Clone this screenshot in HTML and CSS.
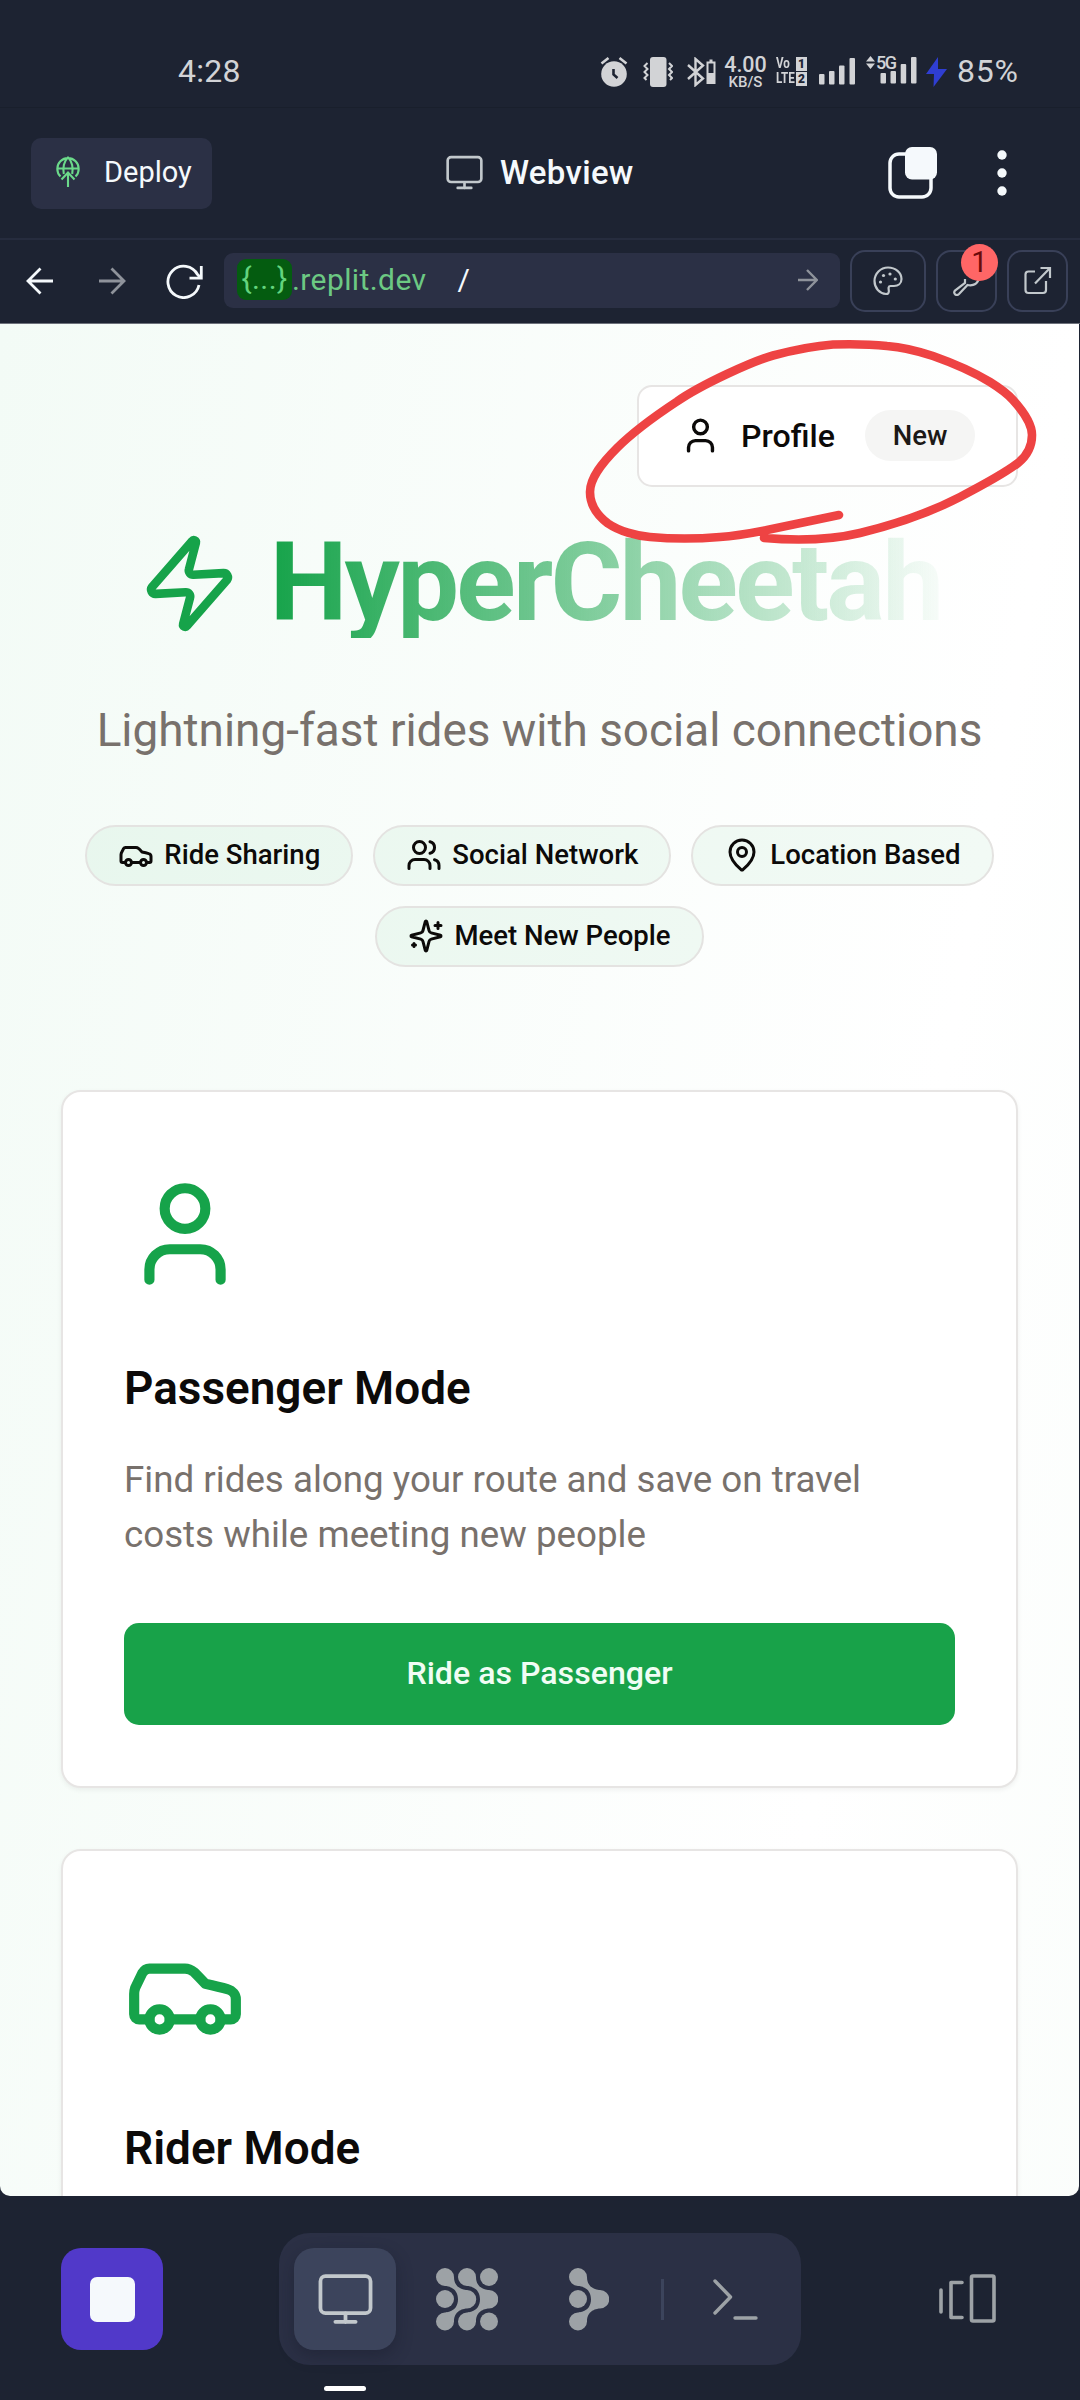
FILE: index.html
```html
<!DOCTYPE html>
<html lang="en">
<head>
<meta charset="utf-8">
<title>Webview</title>
<link rel="stylesheet" href="styles.css">
</head>
<body>
<svg class="defs" aria-hidden="true">
  <symbol id="user" viewBox="0 0 24 24"><path d="M19 21v-2a4 4 0 0 0-4-4H9a4 4 0 0 0-4 4v2"/><circle cx="12" cy="7" r="4"/></symbol>
  <symbol id="car" viewBox="0 0 24 24"><path d="M19 17h2c.6 0 1-.4 1-1v-3c0-.9-.7-1.7-1.5-1.9C18.700 10.600 16 10 16 10s-1.300-1.400-2.200-2.300c-.5-.4-1.100-.7-1.800-.7H5c-.6 0-1.100.4-1.400.9l-1.400 2.900A3.700 3.700 0 0 0 2 12v4c0 .6.4 1 1 1h2"/><circle cx="7" cy="17" r="2"/><path d="M9 17h6"/><circle cx="17" cy="17" r="2"/></symbol>
  <symbol id="monitor" viewBox="0 0 38 35"><rect x="1.700" y="1.700" width="34.600" height="25.600" rx="3.500"/><path d="M19 27.500v6M12 33.300h14"/></symbol>
</svg>
<div class="phone">
  <div class="status">
    <span class="clock">4:28</span>
    <div class="indicators">
      <svg class="alarm" width="28" height="32" viewBox="0 0 28 32"><circle cx="14" cy="18" r="12.800" fill="#d2d3d6"/><path d="M1.500 7.500 8.500 2M26.500 7.500 19.500 2" stroke="#d2d3d6" stroke-width="2.600"/><path d="M13.500 13v5.500l4 3.500" stroke="#1d2332" stroke-width="2.600" fill="none"/></svg>
      <svg class="vibrate" width="30" height="30" viewBox="0 0 30 30"><rect x="7" y="0" width="16.500" height="30" rx="3" fill="#d2d3d6"/><path d="M4.500 6 1.500 9l3 3-3 3 3 3-3 3 2 2M26 6l3 3-3 3 3 3-3 3 3 3-2 2" stroke="#d2d3d6" stroke-width="2" fill="none"/></svg>
      <svg class="bluetooth" width="30" height="30" viewBox="0 0 30 30"><path d="M1 8l15 13.500-7.500 6.500V2L16 8.500 1 22" fill="none" stroke="#d2d3d6" stroke-width="2.400"/><path d="M20.500 5.500h7v20.500h-7zM22.500 3.500h3" fill="none" stroke="#d2d3d6" stroke-width="2"/><path d="M20.500 16h7v10h-7z" fill="#d2d3d6"/></svg>
      <div class="speed"><span class="rate">4.00</span><span class="unit">KB/S</span></div>
      <div class="volte"><span>Vo</span><b>1</b><span class="lte">LTE</span><b>2</b></div>
      <svg class="bars" width="37" height="30" viewBox="0 0 37 30" fill="#d2d3d6"><rect y="16" width="5.500" height="10.500" rx="1"/><rect x="10" y="13" width="5.500" height="13.500" rx="1"/><rect x="20" y="7.500" width="5.500" height="19" rx="1"/><rect x="30.500" y="0" width="5.500" height="26.500" rx="1"/></svg>
      <div class="fiveg">
        <svg width="52" height="30" viewBox="0 0 52 30" fill="#d2d3d6"><path d="M0 5.500 4.500 0 9 5.500zM0 7.500 4.500 13 9 7.500z"/><rect x="14.500" y="17" width="5.500" height="10.500" rx="1"/><rect x="24.500" y="15" width="5.500" height="12.500" rx="1"/><rect x="34.700" y="8" width="5.500" height="19.500" rx="1"/><rect x="45" y="1" width="5.500" height="26.500" rx="1"/></svg>
        <span>5G</span>
      </div>
      <svg class="bolt" width="21" height="30" viewBox="0 0 21 30"><path d="M12 0 0 17h8l-.5 13L21 12h-9z" fill="#2f3ed2"/></svg>
      <span class="percent">85%</span>
    </div>
  </div>

  <header class="header">
    <button class="deploy">
      <svg width="24" height="32" viewBox="0 0 24 32" fill="none" stroke="#6bd98a" stroke-width="2.100"><path d="M4.500 20.500A10.700 10.700 0 1 1 19.500 20.500M1.500 12.500h21M7.800 18C6.500 12 8 5 12 1.500 16 5 17.500 12 16.200 18M12 31V16.500M5.500 23.500l6.500-7 6.500 7"/></svg>
      Deploy
    </button>
    <div class="title"><svg class="line" width="37" height="35" stroke-width="2.700"><use href="#monitor"/></svg>Webview</div>
    <svg class="tabs" width="52" height="54" viewBox="0 0 52 54"><rect x="3" y="8" width="41" height="43" rx="9" fill="none" stroke="#f5f9fc" stroke-width="3.500"/><rect x="18" y="1" width="32" height="32.500" rx="7" fill="#f5f9fc"/></svg>
    <svg class="more" width="12" height="48" viewBox="0 0 12 48" fill="#f5f9fc"><circle cx="6" cy="6" r="4.700"/><circle cx="6" cy="24" r="4.700"/><circle cx="6" cy="42" r="4.700"/></svg>
  </header>

  <nav class="browser">
    <svg class="back" width="28" height="28" viewBox="0 0 28 28"><path d="M27 14H2M14.500 1.500 2 14l12.500 12.500"/></svg>
    <svg class="forward" width="28" height="28" viewBox="0 0 28 28"><path d="M1 14h25M13.500 1.500 26 14 13.500 26.500"/></svg>
    <svg class="reload" width="38" height="36" viewBox="0 0 38 36"><path d="M33 22a15.700 15.700 0 1 1-1.500-10.500L35 15M35.300 3v12.200H23.500"/></svg>
    <div class="url"><mark>{...}</mark><span class="host">.replit.dev</span><span class="path">/</span>
      <svg class="go" width="20" height="22" viewBox="0 0 20 22"><path d="M0 11h18.500M9 1l9.800 10L9 21"/></svg>
    </div>
    <button class="tool wide"><svg width="30" height="30" viewBox="0 0 30 30"><path d="M15 1.500c7.500 0 13.500 5 13.500 11.500 0 4.500-3.500 7-7.500 7h-3.500c-2.500 0-2 2.500-1.700 4.500.4 2.500-.8 3.500-2.800 3.500C6.500 27.500 1.500 22 1.500 15 1.500 7.500 7.500 1.500 15 1.500z"/><g fill="#c2c8cc" stroke="none"><circle cx="7.500" cy="16" r="1.600"/><circle cx="10.500" cy="9.500" r="1.600"/><circle cx="17" cy="8" r="1.600"/><circle cx="22.300" cy="13" r="1.600"/></g></svg></button>
    <button class="tool"><svg width="30" height="30" viewBox="0 0 30 30"><path d="M13 13v4L3 24.500c-2.500 3 1.500 6 4 3.500L15.500 19c5 1 9-.5 11-5"/></svg><span class="count">1</span></button>
    <button class="tool last"><svg width="30" height="30" viewBox="0 0 30 30"><path d="M12 5.500H5.500A3 3 0 0 0 2.500 8.500V24a3 3 0 0 0 3 3H20a3 3 0 0 0 3-3V15M12 17.500 27 2M17.500 2H27v10"/></svg></button>
  </nav>

  <main class="page">
    <div class="actions">
      <button class="profile"><svg class="line" width="41" height="41" stroke-width="2"><use href="#user"/></svg>Profile<span class="new">New</span></button>
    </div>
    <div class="brand">
      <svg class="line zap" width="103" height="103" viewBox="0 0 24 24" stroke-width="2"><path d="M4 14a1 1 0 0 1-.78-1.630l9.900-10.200a.5.5 0 0 1 .86.460l-1.920 6.020A1 1 0 0 0 13 10h7a1 1 0 0 1 .78 1.630l-9.900 10.200a.5.5 0 0 1-.86-.460l1.920-6.020A1 1 0 0 0 11 14z"/></svg>
      <h1>HyperCheetah</h1>
    </div>
    <p class="tagline">Lightning-fast rides with social connections</p>
    <div class="pills">
      <span class="pill"><svg class="line" width="36" height="36" stroke-width="2"><use href="#car"/></svg>Ride Sharing</span>
      <span class="pill"><svg class="line" width="36" height="36" viewBox="0 0 24 24" stroke-width="2"><path d="M16 21v-2a4 4 0 0 0-4-4H6a4 4 0 0 0-4 4v2"/><circle cx="9" cy="7" r="4"/><path d="M22 21v-2a4 4 0 0 0-3-3.870M16 3.130a4 4 0 0 1 0 7.750"/></svg>Social Network</span>
      <span class="pill"><svg class="line" width="36" height="36" viewBox="0 0 24 24" stroke-width="2"><path d="M20 10c0 4.993-5.539 10.193-7.399 11.799a1 1 0 0 1-1.202 0C9.539 20.193 4 14.993 4 10a8 8 0 0 1 16 0"/><circle cx="12" cy="10" r="3"/></svg>Location Based</span>
      <span class="pill"><svg class="line" width="36" height="36" viewBox="0 0 24 24" stroke-width="2"><path d="M9.937 15.500A2 2 0 0 0 8.500 14.063l-6.135-1.582a.5.5 0 0 1 0-.962L8.500 9.936A2 2 0 0 0 9.937 8.500l1.582-6.135a.5.5 0 0 1 .963 0L14.063 8.500A2 2 0 0 0 15.500 9.937l6.135 1.581a.5.5 0 0 1 0 .964L15.500 14.063a2 2 0 0 0-1.437 1.437l-1.582 6.135a.5.5 0 0 1-.963 0zM20 3v4M22 5h-4M4 17v2M5 18H3"/></svg>Meet New People</span>
    </div>
    <section class="card">
      <svg class="line hero" width="122" height="122" stroke-width="2"><use href="#user"/></svg>
      <h2>Passenger Mode</h2>
      <p>Find rides along your route and save on travel costs while meeting new people</p>
      <button class="primary">Ride as Passenger</button>
    </section>
    <section class="card">
      <svg class="line hero" width="122" height="122" stroke-width="2"><use href="#car"/></svg>
      <h2>Rider Mode</h2>
    </section>
  </main>

  <footer class="bottom">
    <button class="stop"><i></i></button>
    <div class="dock">
      <button class="item active"><svg class="line" width="55" height="52" stroke-width="2.600"><use href="#monitor"/></svg></button>
      <button class="item"><svg width="62" height="64" viewBox="0 0 62 64" fill="#9da2a6"><path d="M9 1a9 9 0 0 1 9 9c0 13 13 13 13 13a9 9 0 0 1 0 18.500s-13 0-13 13a9 9 0 1 1-9-9s13 0 13-13.200S9 19 9 19A9 9 0 0 1 9 1z"/><path d="M31 1a9 9 0 0 1 9 9c0 13 13 13 13 13a9 9 0 0 1 0 18.500s-13 0-13 13a9 9 0 1 1-9-9s13 0 13-13.200S31 19 31 19A9 9 0 0 1 31 1z"/><circle cx="9" cy="32" r="9"/><circle cx="53" cy="10" r="9"/><circle cx="53" cy="54.500" r="9"/></svg></button>
      <button class="item agent"><svg width="40" height="64" viewBox="0 0 40 64" fill="#9da2a6"><path d="M9 1a9 9 0 0 1 9 9c0 13 13 13 13 13a9 9 0 0 1 0 18.500s-13 0-13 13a9 9 0 1 1-9-9s13 0 13-13.200S9 19 9 19A9 9 0 0 1 9 1z"/><circle cx="9" cy="32" r="9"/></svg></button>
      <i class="divider"></i>
      <button class="item shell"><svg class="line" width="46" height="44" viewBox="0 0 46 44" stroke-width="3.400"><path d="M3 4 18.500 20 3 36M23 41h21"/></svg></button>
    </div>
    <svg class="line panels" width="60" height="52" viewBox="0 0 60 52" stroke-width="3.600"><path d="M3 17v22M24 9.500H13V44.500H24"/><rect x="33.500" y="3" width="22.500" height="45" rx="1.500"/></svg>
    <i class="current"></i>
  </footer>

  <svg class="annotation" width="1080" height="2400" viewBox="0 0 1080 2400"><path d="M764 538C800 541 835 539 860 533 905 522 935 510 960 497 985 484 1005 473 1018 463 1028 455 1032 445 1032 435 1032 424 1023 411 1013 400 1006 392 998 387 990 382 972 371 950 362 933 356 918 351 900 347 887 346 868 344 850 344 833 344.500 813 346 790 351 773 355.500 757 360 742 367 727 374 710 382 692 391 677 401.500 655 416 632 433 617 448 602 463 590 478 590 492 590 505 598 516 608 523.500 619 531 636 536 650 537 672 539 697 539 720 537 736 536 752 533 767 530L839 515"/></svg>
</div>
</body>
</html>
```
FILE: styles.css
```css
* { box-sizing: border-box; }
body { margin: 0; background: #1d2332; font-family: Roboto, "Noto Sans", sans-serif; }
button { border: 0; margin: 0; padding: 0; background: none; font: inherit; color: inherit; }
svg { display: block; flex: none; }
h1, h2, p { margin: 0; }
.defs { position: absolute; width: 0; height: 0; }
.line { fill: none; stroke: currentColor; stroke-linecap: round; stroke-linejoin: round; }
.phone { position: relative; width: 1080px; height: 2400px; overflow: hidden; display: flex; flex-direction: column; background: #1d2332; }

.status { height: 108px; border-bottom: 1px solid #191f2c; display: flex; justify-content: space-between; align-items: flex-start; padding: 54px 61px 0 178px; color: #d2d3d6; }
.clock, .percent { font-size: 32px; line-height: 34px; letter-spacing: .3px; }
.indicators { display: flex; height: 34px; align-items: flex-start; }
.alarm { margin: 2px 15px 0 0; }
.vibrate { margin: 3px 14px 0 0; }
.bluetooth { margin: 3px 7px 0 0; }
.speed { display: flex; flex-direction: column; align-items: center; width: 43px; }
.rate { font-size: 21.500px; font-weight: 500; line-height: 21px; }
.unit { font-size: 15px; font-weight: 500; line-height: 15px; }
.volte { display: grid; grid-template-columns: 20px 11px; grid-template-rows: 14px 14px; gap: 1px 0; margin: 3px 12px 0 9px; font-size: 14.500px; font-weight: 700; line-height: 14px; }
.volte span { width: 24px; transform: scaleX(.8); transform-origin: left; }
.volte b { background: #d2d3d6; color: #1d2332; text-align: center; font-size: 12px; }
.bars { margin: 4px 10px 0 0; }
.fiveg { position: relative; margin: 2px 8px 0 0; }
.fiveg span { position: absolute; left: 10px; top: -2px; font-size: 18px; line-height: 17px; font-weight: 500; letter-spacing: -1.500px; background: #1d2332; }
.bolt { margin: 3px 10px 0 0; }
.percent { letter-spacing: .8px; width: 62px; }

.header { height: 132px; border-bottom: 2px solid #262c3e; display: flex; align-items: center; padding-left: 31px; color: #f5f9fc; }
.deploy { width: 181px; height: 71px; border-radius: 10px; background: #2b3045; display: flex; align-items: center; gap: 24px; padding: 0 0 2px 25px; font-size: 29px; }
.title { display: flex; align-items: center; gap: 17px; margin-left: 234px; width: 200px; padding-bottom: 2px; font-size: 33px; font-weight: 500; letter-spacing: .3px; }
.title svg { color: #c2c8cc; }
.tabs { margin-left: 241px; }
.more { margin-left: 57px; }

.browser { height: 84px; display: flex; align-items: center; border-bottom: 1px solid #6d717b; padding: 0 0 2px 26px; fill: none; stroke: #f5f9fc; stroke-width: 2.800px; }
.back, .forward, .reload, .go { fill: none; }
.forward { margin-left: 44px; stroke: #8f939b; }
.reload { margin: 0 20px 0 40px; }
.url { width: 616px; height: 55px; border-radius: 9px; background: #2b3045; display: flex; align-items: center; padding: 0 22px 2px 13px; font-size: 30px; stroke: none; letter-spacing: .4px; color: #6cc983; }
.url mark { width: 55px; height: 41px; border-radius: 9px; background: #045c10; color: #63d47e; text-align: center; line-height: 39px; }
.path { margin-left: 31px; color: #f5f9fc; }
.go { margin-left: auto; stroke: #8f939b; stroke-width: 2.400px; }
.tool { position: relative; width: 61px; height: 62px; margin-left: 10px; border: 2px solid #394058; border-radius: 15px; display: flex; align-items: center; justify-content: center; stroke: #c2c8cc; stroke-width: 2.200px; }
.tool.wide { width: 76px; }
.count { position: absolute; left: 23px; top: -8px; width: 37px; height: 37px; border-radius: 50%; background: #ff6666; color: #6b0a0a; font-size: 29px; line-height: 36px; text-align: center; }

.page { width: 1079px; height: 1872px; overflow: hidden; padding: 61px 61px 0; border-radius: 0 0 10px 10px; color: #0c0a09; background: linear-gradient(to bottom right, #f3fbf6, #fff 50%, #f1faf4) 0 0 / 1079px 6000px; }
.actions { display: flex; justify-content: flex-end; }
.profile { width: 381px; height: 102px; border: 2px solid #e7e5e4; border-radius: 15px; background: #fff; display: flex; align-items: center; padding: 0 0 1px 41px; font-size: 32.130px; font-weight: 500; }
.profile svg { margin-right: 20px; }
.new { margin-left: auto; margin-right: 41px; width: 110px; height: 51px; border-radius: 26px; background: #f5f5f4; color: #1c1917; font-size: 27.540px; font-weight: 500; line-height: 51px; text-align: center; }
.brand { display: flex; justify-content: center; align-items: center; gap: 29px; height: 110px; margin-top: 41px; color: #16a34a; }
.zap { transform: rotate(-3deg); }
h1 { font-size: 110px; font-weight: 700; line-height: 110px; letter-spacing: -2.750px; color: transparent; background: linear-gradient(to right, #16a34a, rgba(22, 163, 74, .03)); -webkit-background-clip: text; background-clip: text; }
.tagline { margin-top: 60px; font-size: 45.900px; line-height: 64px; text-align: center; white-space: nowrap; color: #78716c; }
.pills { display: flex; flex-wrap: wrap; justify-content: center; gap: 20px; margin-top: 63px; }
.pill { height: 61px; border: 2px solid #e4e3e1; border-radius: 31px; background: rgba(22, 163, 74, .055); display: flex; align-items: center; gap: 10px; padding: 0 31px 2px 31px; font-size: 27.540px; font-weight: 500; }
.card { margin-top: 61px; padding: 82px 61px 61px; border: 2px solid #e7e5e4; border-radius: 20px; background: #fff; box-shadow: 0 2px 5px rgba(0, 0, 0, .06); }
.pills + .card { margin-top: 123px; padding-top: 81px; }
.hero { color: #16a34a; }
h2 { margin-top: 61px; font-size: 45.900px; font-weight: 600; line-height: 64px; }
.card p { margin-top: 32px; font-size: 36.720px; line-height: 55px; color: #78716c; }
.primary { width: 100%; height: 102px; margin-top: 61px; padding-bottom: 2px; border-radius: 15px; background: #18a249; color: #f0fdf4; font-size: 32.130px; font-weight: 500; }

.bottom { position: relative; flex: 1; display: flex; align-items: center; padding: 2px 0 0 61px; }
.stop { width: 102px; height: 102px; border-radius: 20px; background: #5139c9; display: flex; align-items: center; justify-content: center; }
.stop i { width: 45px; height: 45px; border-radius: 7px; background: #f5f9fc; }
.dock { width: 522px; height: 132px; margin-left: 116px; padding-left: 15px; border-radius: 31px; background: #2b3045; display: flex; align-items: center; color: #9da2a6; }
.item { width: 102px; height: 102px; margin-right: 20px; border-radius: 20px; display: flex; align-items: center; justify-content: center; }
.item.active { background: #3c445c; color: #c2c8cc; box-shadow: 0 6px 16px rgba(20, 24, 38, .35); }
.item.agent { margin-right: 21px; }
.divider { width: 3px; height: 41px; background: #3c445c; }
.shell { margin-left: 20px; margin-right: 0; }
.panels { margin-left: 137px; color: #9da2a6; }
.current { position: absolute; left: 324px; bottom: 9px; width: 42px; height: 5px; border-radius: 3px; background: #fff; }
.annotation { position: absolute; left: 0; top: 0; fill: none; stroke: #ee4343; stroke-width: 8.600px; stroke-linecap: round; stroke-linejoin: round; pointer-events: none; }
```
